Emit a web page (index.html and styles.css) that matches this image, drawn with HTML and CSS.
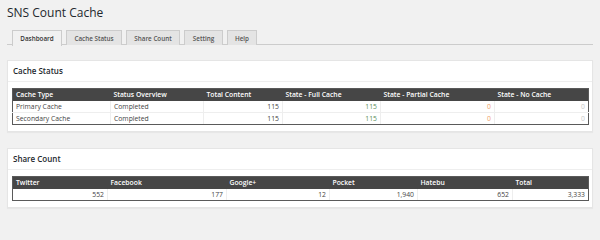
FILE: index.html
```html
<!DOCTYPE html>
<html>
<head>
<meta charset="utf-8">
<link rel="stylesheet" href="styles.css">
</head>
<body>
<div class="wrap">
  <h1 class="title">SNS Count Cache</h1>
  <div class="tabs">
    <span class="tab active">Dashboard</span>
    <span class="tab">Cache Status</span>
    <span class="tab">Share Count</span>
    <span class="tab">Setting</span>
    <span class="tab">Help</span>
  </div>

  <div class="panel">
    <div class="panel-head">Cache Status</div>
    <div class="panel-body">
      <table class="grid">
        <colgroup>
          <col class="c98"><col class="c93"><col class="c79"><col class="c98"><col class="c114"><col class="c94">
        </colgroup>
        <thead>
          <tr><th>Cache Type</th><th>Status Overview</th><th>Total Content</th><th>State - Full Cache</th><th>State - Partial Cache</th><th>State - No Cache</th></tr>
        </thead>
        <tbody>
          <tr><td>Primary Cache</td><td>Completed</td><td class="num">115</td><td class="num full">115</td><td class="num partial">0</td><td class="num none">0</td></tr>
          <tr><td>Secondary Cache</td><td>Completed</td><td class="num">115</td><td class="num full">115</td><td class="num partial">0</td><td class="num none">0</td></tr>
        </tbody>
      </table>
    </div>
  </div>

  <div class="panel">
    <div class="panel-head">Share Count</div>
    <div class="panel-body">
      <table class="grid">
        <colgroup>
          <col class="c95"><col class="c119"><col class="c103"><col class="c88"><col class="c95"><col class="c76">
        </colgroup>
        <thead>
          <tr><th>Twitter</th><th>Facebook</th><th>Google+</th><th>Pocket</th><th>Hatebu</th><th>Total</th></tr>
        </thead>
        <tbody>
          <tr><td class="num">552</td><td class="num">177</td><td class="num">12</td><td class="num">1,940</td><td class="num">652</td><td class="num">3,333</td></tr>
        </tbody>
      </table>
    </div>
  </div>
</div>
</body>
</html>
```

FILE: styles.css
```css
* { box-sizing: border-box; }
html, body { margin: 0; padding: 0; }
body {
  background: #f1f1f1;
  font-family: "Open Sans", "Noto Sans", sans-serif;
  color: #444;
  width: 600px;
  height: 214px;
  overflow: hidden;
}
.wrap { padding: 0 7px; }
.title {
  margin: 0;
  padding-top: 5px;
  font-size: 12px;
  line-height: 16px;
  font-weight: 400;
  color: #23282d;
  height: 30px;
}
.tabs {
  display: flex;
  gap: 4px;
  padding-left: 5px;
  border-bottom: 1px solid #ccc;
  height: 15px;
}
.tab {
  display: flex;
  align-items: center;
  justify-content: center;
  height: 15px;
  background: #e4e4e4;
  border: 1px solid #ccc;
  border-bottom: none;
  font-size: 6.3px;
  font-weight: 600;
  color: #555;
}
.tab:nth-child(1) { width: 50px; }
.tab:nth-child(2) { width: 56px; }
.tab:nth-child(3) { width: 54px; }
.tab:nth-child(4) { width: 39px; }
.tab:nth-child(5) { width: 30px; }
.tab.active {
  background: #f1f1f1;
  height: 16px;
  color: #333;
}
.panel {
  margin-top: 15px;
  background: #fff;
  border: 1px solid #e5e5e5;
  box-shadow: 0 1px 1px rgba(0,0,0,0.04);
}
.panel + .panel { margin-top: 16px; }
.panel-head {
  height: 21px;
  line-height: 20px;
  padding-left: 5px;
  border-bottom: 1px solid #eee;
  font-size: 8px;
  font-weight: 600;
  color: #23282d;
}
.panel-body { padding: 6px 4px 6px; }
.grid {
  width: 576px;
  border-collapse: collapse;
  table-layout: fixed;
  border: 1px solid #5a5a5a;
  font-size: 6.8px;
}
.grid th {
  background: #464646;
  color: #fff;
  font-weight: 600;
  text-align: left;
  height: 12px;
  padding: 0 3px;
  white-space: nowrap;
}
.grid td {
  height: 12px;
  padding: 0 3px;
  border: 1px solid #eee;
  border-top: none;
  white-space: nowrap;
  color: #444;
}
.grid tr:last-child td { border-bottom: 1px solid #5a5a5a; }
.grid td:first-child { border-left: 1px solid #5a5a5a; }
.grid td:last-child { border-right: 1px solid #5a5a5a; }
.grid .num { text-align: right; }
.grid .full { color: #5b8f5b; }
.grid .partial { color: #f0a06a; }
.grid .none { color: #c8c8c8; }
.c98 { width: 98px; } .c93 { width: 93px; } .c79 { width: 79px; }
.c114 { width: 114px; } .c94 { width: 94px; }
.c95 { width: 95px; } .c119 { width: 119px; } .c103 { width: 103px; }
.c88 { width: 88px; } .c76 { width: 76px; }
```
